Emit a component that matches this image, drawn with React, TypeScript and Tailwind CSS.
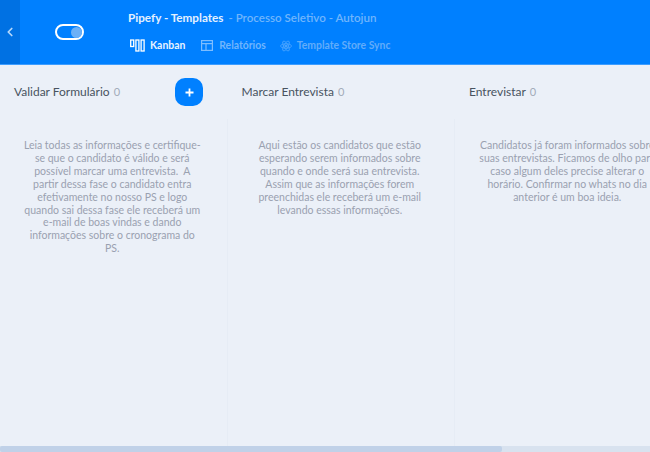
import { ChevronLeft } from 'lucide-react';

const colunas = [
  {
    titulo: 'Validar Formulário',
    texto: [
      'Leia todas as informações e certifique-',
      'se que o candidato é válido e será',
      'possível marcar uma entrevista.  A',
      'partir dessa fase o candidato entra',
      'efetivamente no nosso PS e logo',
      'quando sai dessa fase ele receberá um',
      'e-mail de boas vindas e dando',
      'informações sobre o cronograma do',
      'PS.'
    ],
    add: true
  },
  {
    titulo: 'Marcar Entrevista',
    texto: [
      'Aqui estão os candidatos que estão',
      'esperando serem informados sobre',
      'quando e onde será sua entrevista.',
      'Assim que as informações forem',
      'preenchidas ele receberá um e-mail',
      'levando essas informações.'
    ],
    add: false
  },
  {
    titulo: 'Entrevistar',
    texto: [
      'Candidatos já foram informados sobre',
      'suas entrevistas. Ficamos de olho para',
      'caso algum deles precise alterar o',
      'horário. Confirmar no whats no dia',
      'anterior é um boa ideia.'
    ],
    add: false
  }
];

function KanbanIcon() {
  return (
    <svg width="15" height="13" viewBox="0 0 15 13" fill="none" stroke="white" strokeWidth="1.3">
      <rect x="0.7" y="1" width="3" height="6.5" />
      <rect x="5.9" y="1" width="3" height="11" />
      <rect x="11.1" y="1" width="3" height="11" />
    </svg>
  );
}

function RelatoriosIcon() {
  return (
    <svg width="12" height="11" viewBox="0 0 12 11" fill="none" stroke="#7dbdff" strokeWidth="1.2">
      <rect x="0.6" y="0.6" width="10.8" height="9.8" />
      <path d="M0.6 3.6H11.4M5 3.6V10.4" />
    </svg>
  );
}

function SyncIcon() {
  return (
    <svg width="12" height="12" viewBox="0 0 24 24" fill="none" stroke="#4fa6ff" strokeWidth="1.6">
      <circle cx="12" cy="12" r="2" fill="#4fa6ff" />
      <ellipse cx="12" cy="12" rx="11" ry="4.4" />
      <ellipse cx="12" cy="12" rx="11" ry="4.4" transform="rotate(60 12 12)" />
      <ellipse cx="12" cy="12" rx="11" ry="4.4" transform="rotate(120 12 12)" />
    </svg>
  );
}

export default function App() {
  return (
    <div className="w-[650px] h-[452px] overflow-hidden flex flex-col bg-[#ebf0f8] font-['Lato',sans-serif]">
      {/* topo */}
      <header className="h-[65px] shrink-0 flex bg-[#0080ff] border-b border-[#3d9dff]">
        <div className="w-5 flex items-center justify-center bg-[#0071e3]">
          <ChevronLeft size={14} strokeWidth={3} className="text-[#b5d8fb]" />
        </div>
        <div className="w-[108px] flex items-center pl-[35px]">
          <div className="w-[29px] h-[16px] rounded-full border-[2.5px] border-white flex items-center justify-end">
            <span className="w-[11px] h-[11px] rounded-full bg-[#6cb0f7]" />
          </div>
        </div>
        <div className="flex flex-col pt-[10px]">
          <div className="h-[16px] flex items-center gap-[5px] font-bold leading-none whitespace-nowrap">
            <span className="text-[#e3f0ff] text-[11.7px]">Pipefy - Templates</span>
            <span className="text-[#70b5fc] text-[11.6px] font-semibold">- Processo Seletivo - Autojun</span>
          </div>
          <nav className="mt-[13px] flex items-center text-[10.4px] font-bold leading-none whitespace-nowrap">
            <span className="flex items-center gap-[5px] text-[#e8f3ff] ml-[2px]">
              <KanbanIcon />
              Kanban
            </span>
            <span className="flex items-center gap-[6px] text-[#70b5fc] ml-[16px]">
              <RelatoriosIcon />
              Relatórios
            </span>
            <span className="flex items-center gap-[5px] text-[#62acfa] ml-[14px]">
              <SyncIcon />
              Template Store Sync
            </span>
          </nav>
        </div>
      </header>

      {/* colunas */}
      <main className="flex-1 flex min-h-0">
        {colunas.map((coluna, i) => (
          <section key={i} className="w-[227.5px] shrink-0 flex flex-col whitespace-nowrap">
            <div className="h-[54px] shrink-0 flex items-center justify-between pl-[14px] pr-[24.5px]">
              <h3 className="text-[12px] font-normal text-[#48535f] leading-none">
                {coluna.titulo} <span className="ml-[1px] text-[#a2abb8] text-[11px]">0</span>
              </h3>
              {coluna.add && (
                <button className="w-[28px] h-[28px] rounded-[10px] bg-[#0080ff] flex items-center justify-center">
                  <svg width="9" height="9" viewBox="0 0 9 9" stroke="white" strokeWidth="1.8">
                    <path d="M4.5 0.5V8.5M0.5 4.5H8.5" />
                  </svg>
                </button>
              )}
            </div>
            <div className="flex-1 min-h-0 border-r border-[#e6ecf5] pt-[20px] pr-[2px] text-center text-[10.5px] leading-[12.9px] text-[#9aa1b0]">
              {coluna.texto.map((linha, j) => (
                <p key={j} className="whitespace-pre">{linha}</p>
              ))}
            </div>
          </section>
        ))}
      </main>

      {/* barra de rolagem */}
      <div className="h-[6px] shrink-0 bg-[#d8e2ef]">
        <div className="w-[502px] h-full rounded-[2px] bg-[#c0d1e8]" />
      </div>
    </div>
  );
}
